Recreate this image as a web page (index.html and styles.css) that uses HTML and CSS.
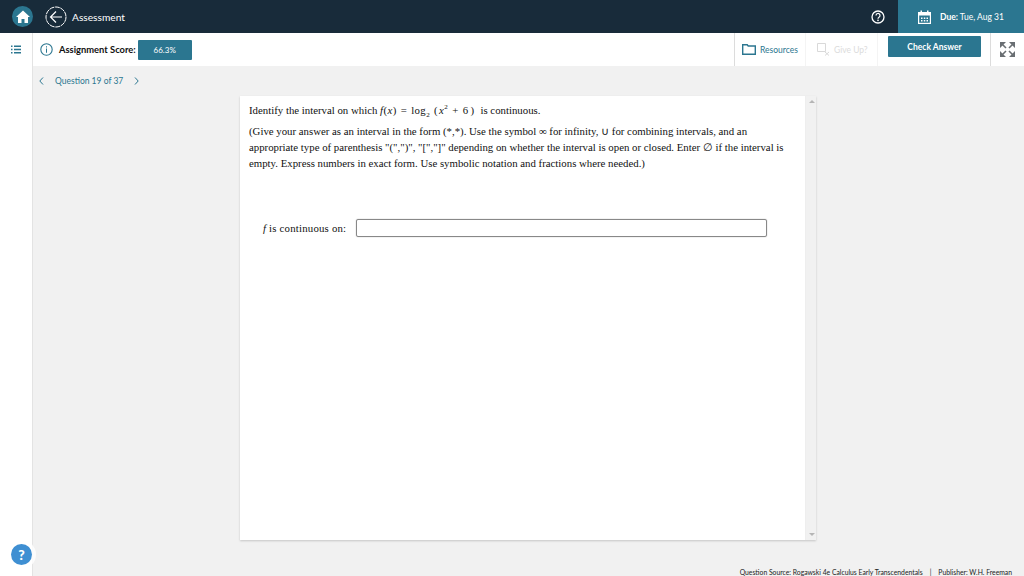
FILE: index.html
```html
<!DOCTYPE html>
<html lang="en">
<head>
<meta charset="utf-8">
<title>Assessment</title>
<link rel="stylesheet" href="styles.css">
</head>
<body>
<div class="app">
  <header class="topbar">
    <div class="home"><svg width="14" height="13" viewBox="0 0 14 13"><path d="M7 .5 14 7h-2v6H8.500V9h-3v4H2V7H0z" fill="#fff"/></svg></div>
    <svg class="back" width="22" height="22" viewBox="0 0 22 22"><circle cx="11" cy="11" r="10" fill="none" stroke="#fff" stroke-dasharray="5 .7"/><path d="M17 11H5.500M11 5.500 5.500 11l5.500 5.500" fill="none" stroke="#fff" stroke-width="1.200"/></svg>
    <span class="title">Assessment</span>
    <svg class="qmark" width="14" height="14" viewBox="0 0 14 14"><circle cx="7" cy="7" r="6" fill="none" stroke="#fff" stroke-width="1.300"/><path d="M5 5.500a2 2 0 1 1 3 1.700c-.7.400-1 .8-1 1.500" fill="none" stroke="#fff" stroke-width="1.200"/><circle cx="7" cy="10.400" r=".8" fill="#fff"/></svg>
    <div class="due">
      <svg width="13" height="14" viewBox="0 0 13 14"><path d="M0 2h2.500V.5h1.500V2h5V.5h1.500V2H13v12H0z" fill="#fff"/><path d="M1.200 5.500h10.600v7.300H1.200z" fill="#2b7690"/><path d="M3 7.500h1.500V9H3zM5.800 7.500h1.500V9H5.800zM8.500 7.500H10V9H8.500zM3 10h1.500v1.500H3zM5.800 10h1.500v1.500H5.800zM8.500 10H10v1.500H8.500z" fill="#fff"/></svg>
      <span class="due-text"><b>Due:</b> Tue, Aug 31</span>
    </div>
  </header>
  <div class="subbar">
    <div class="menu-cell"><svg width="10" height="9" viewBox="0 0 10 9"><path d="M0 .5h1.500v1.500H0zM3 .5h7v1.500H3zM0 3.800h1.500v1.500H0zM3 3.800h7v1.500H3zM0 7h1.500v1.500H0zM3 7h7v1.500H3z" fill="#2b7690"/></svg></div>
    <svg class="info" width="13" height="13" viewBox="0 0 13 13"><circle cx="6.500" cy="6.500" r="5.700" fill="none" stroke="#2b7690" stroke-width="1.100"/><path d="M6 5.500h1v4.200H6zM6 3.200h1v1.200H6z" fill="#2b7690"/></svg>
    <span class="score-label">Assignment Score:</span>
    <span class="score">66.3%</span>
    <div class="actions">
      <div class="action res"><svg width="14" height="11" viewBox="0 0 14 11"><path d="M.7.7h4.500l1 1.300h7.100v8.300H.7z" fill="none" stroke="#2b7690" stroke-width="1.400"/></svg><span>Resources</span></div>
      <div class="action give"><svg width="13" height="13" viewBox="0 0 13 13"><path d="M.5.500h8v8h-8z" fill="none" stroke="#d9d9d9"/><path d="m8 9 4 3.500M12 9l-4 3.500" stroke="#d9d9d9"/></svg><span>Give Up?</span></div>
      <div class="check-cell"><button class="check">Check Answer</button></div>
      <div class="expand"><svg width="15" height="15" viewBox="0 0 15 15"><path d="M0 0h6L0 6zM15 0H9l6 6zM0 15h6l-6-6zM15 15H9l6-6z" fill="#6a6f73"/><path d="m2 2 4 4M13 2 9 6M2 13l4-4M13 13 9 9" stroke="#6a6f73" stroke-width="1.600"/></svg></div>
    </div>
  </div>
  <div class="body">
    <aside class="side"><div class="help">?</div></aside>
    <main class="content">
      <nav class="pager">
        <svg width="5" height="8" viewBox="0 0 5 8"><path d="M4 .5.800 4 4 7.500" fill="none" stroke="#2b7690"/></svg>
        <span class="qnum">Question 19 of 37</span>
        <svg width="5" height="8" viewBox="0 0 5 8"><path d="M1 .5 4.200 4 1 7.500" fill="none" stroke="#2b7690"/></svg>
      </nav>
      <section class="panel">
        <div class="question">
          <p class="q1">Identify the interval on which <span class="math"><i>f</i>(<i>x</i>)<span class="op">=</span>log<sub>2</sub><span class="paren">(</span><i>x</i><sup>2</sup><span class="op">+</span>6<span class="end">)</span></span>is continuous.</p>
          <p class="q2">(Give your answer as an interval in the form (*,*). Use the symbol ∞ for infinity, ∪ for combining intervals, and an appropriate type of parenthesis "(",")", "[","]" depending on whether the interval is open or closed. Enter ∅ if the interval is empty. Express numbers in exact form. Use symbolic notation and fractions where needed.)</p>
          <div class="answer"><label class="ans-label"><i>f</i> is continuous on:</label><div class="ans-box"></div></div>
        </div>
        <div class="scroll"><span class="up"></span><span class="down"></span></div>
      </section>
      <footer class="source"><span>Question Source: Rogawski 4e Calculus Early Transcendentals</span><span class="sep">|</span><span>Publisher: W.H. Freeman</span></footer>
    </main>
  </div>
</div>
</body>
</html>
```
FILE: styles.css
```css
* { box-sizing: border-box; }
html, body { margin: 0; height: 100%; overflow: hidden; }
body { font-family: Lato, "Noto Sans", sans-serif; color: #111; background: #f1f1f1; }
.app { display: flex; flex-direction: column; height: 576px; }

.topbar { height: 33px; background: #182b3a; display: flex; align-items: center; padding-left: 12px; color: #fff; flex: none; }
.home { width: 21px; height: 21px; border-radius: 50%; background: #2b7690; display: flex; align-items: center; justify-content: center; }
.back { margin-left: 12px; }
.title { margin-left: 5px; font-size: 10.200px; }
.qmark { margin-left: auto; margin-right: 13px; }
.due { width: 126px; height: 33px; background: #2b7690; display: flex; align-items: center; padding-left: 20px; gap: 9px; }
.due-text { font-size: 8.500px; }

.subbar { height: 33px; background: #fff; display: flex; align-items: center; flex: none; }
.menu-cell { width: 33px; height: 33px; border-right: 1px solid #e3e3e3; display: flex; align-items: center; justify-content: center; }
.info { margin-left: 7px; }
.score-label { margin-left: 6px; font-size: 9.350px; font-weight: 700; }
.score { margin-left: 2px; width: 54px; height: 20px; background: #2b7690; color: #fff; font-size: 8px; display: flex; align-items: center; justify-content: center; border-radius: 1px; }
.actions { margin-left: auto; height: 33px; display: flex; }
.action { display: flex; align-items: center; gap: 4px; height: 33px; font-size: 8.500px; }
.res { width: 72px; border-left: 1px solid #dcdcdc; padding-left: 7px; color: #2b7690; border-right: 1px solid #f4f4f4; }
.give { width: 72px; padding-left: 11px; color: #dcdcdc; border-right: 1px solid #f4f4f4; }
.check-cell { width: 112px; padding: 3px 0 0 10px; }
.check { display: block; width: 93px; height: 21px; background: #2b7690; color: #fff; border: 0; border-radius: 1px; font: 700 8.500px Lato, sans-serif; padding: 0; }
.expand { width: 34px; border-left: 1px solid #dcdcdc; display: flex; align-items: center; justify-content: center; }

.body { flex: 1; display: flex; min-height: 0; }
.side { width: 33px; background: #fff; border-right: 1px solid #e3e3e3; position: relative; flex: none; }
.help { position: absolute; left: 11px; top: 478px; width: 21px; height: 21px; border-radius: 50%; background: #3f8fd2; color: #fff; font-weight: 900; font-size: 14px; display: flex; align-items: center; justify-content: center; box-shadow: 0 0 0 4px rgba(255,255,255,.8); }
.content { flex: 1; display: flex; flex-direction: column; min-width: 0; }
.pager { height: 30px; display: flex; align-items: center; padding-left: 6px; color: #2b7690; flex: none; }
.qnum { font-size: 8.500px; margin: 0 11px; }

.panel { margin-left: 207px; width: 576px; height: 444px; background: #fff; box-shadow: 0 1px 2px rgba(0,0,0,.18); display: flex; flex: none; }
.question { flex: 1; padding: 6px 0 0 9px; font-family: "Liberation Serif", serif; font-size: 10.800px; line-height: 16px; color: #111; }
.q1 { margin: 0; height: 16px; white-space: nowrap; }
.math { margin-right: 6px; letter-spacing: .4px; }
.op { margin: 0 4px; }
.paren { margin-left: 4px; margin-right: 1px; }
.end { margin-left: 2px; }
.q1 sub, .q1 sup { font-size: 7px; line-height: 0; }
.q2 { margin: 5px 0 0; width: 536px; }
.answer { display: flex; align-items: center; margin-top: 48px; padding-left: 14px; }
.ans-label { width: 93px; letter-spacing: .2px; }
.ans-box { width: 411px; height: 18px; border: 1px solid #888; border-radius: 2px; box-shadow: 0 0 1px #888; }
.scroll { width: 11px; background: #f1f1f1; position: relative; border-left: 1px solid #eee; }
.up, .down { position: absolute; left: 3px; width: 0; height: 0; border-left: 3px solid transparent; border-right: 3px solid transparent; }
.up { top: 4px; border-bottom: 3px solid #b5b5b5; }
.down { bottom: 4px; border-top: 3px solid #b5b5b5; }

.source { margin-top: auto; height: 8px; display: flex; justify-content: flex-end; align-items: center; font-size: 6.800px; padding-right: 12px; color: #222; }
.sep { margin: 0 7px; }
```
